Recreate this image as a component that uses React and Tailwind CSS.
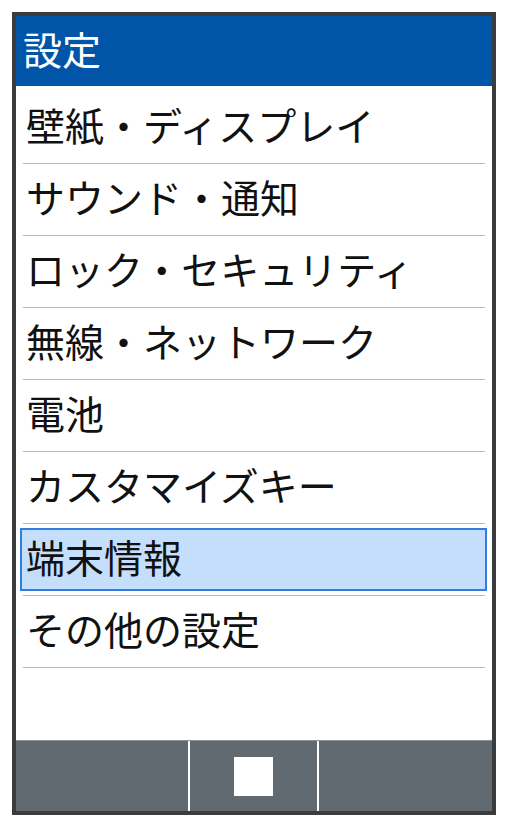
const items = [
  '壁紙・ディスプレイ',
  'サウンド・通知',
  'ロック・セキュリティ',
  '無線・ネットワーク',
  '電池',
  'カスタマイズキー',
  '端末情報',
  'その他の設定',
]

export default function App() {
  return (
    <div className="w-[507px] h-[826px] bg-white pt-[12px] pl-[12px]" style={{ fontFamily: '"Noto Sans CJK JP", "Noto Sans", sans-serif' }}>
      <div className="w-[484px] h-[803px] border-4 border-[#3a3c3d] flex flex-col bg-white">
        {/* header */}
        <div className="h-[70px] bg-[#0055a8] flex items-center pl-[7px] pb-[5px] text-white text-[39px] leading-none">
          設定
        </div>

        {/* list */}
        <div className="flex-1 pt-[6px]">
          {items.map((label, i) => (
            <div key={label}>
              <div className="h-[71px] flex">
                {i === 6 ? (
                  <div className="flex-1 mt-[4px] mb-[4px] ml-[4px] mr-[5px] bg-[#c4defc] border-2 border-[#2f7ee0] flex items-center pl-[4px] pb-[6px] text-[39px] leading-none text-[#111]">
                    {label}
                  </div>
                ) : (
                  <div className="flex-1 flex items-center pl-[10px] pb-[7px] text-[39px] leading-none text-[#111]">
                    {label}
                  </div>
                )}
              </div>
              <div className="mx-[7px] h-px bg-[#b4b8b8]" />
            </div>
          ))}
        </div>

        {/* soft keys */}
        <div className="h-[71px] bg-[#606a70] flex border-t border-[#8a9296]">
          <div className="w-[172px]" />
          <div className="w-[2px] bg-white" />
          <div className="w-[127px] flex items-center justify-center">
            <div className="w-[39px] h-[39px] bg-white" />
          </div>
          <div className="w-[2px] bg-white" />
          <div className="flex-1" />
        </div>
      </div>
    </div>
  )
}
